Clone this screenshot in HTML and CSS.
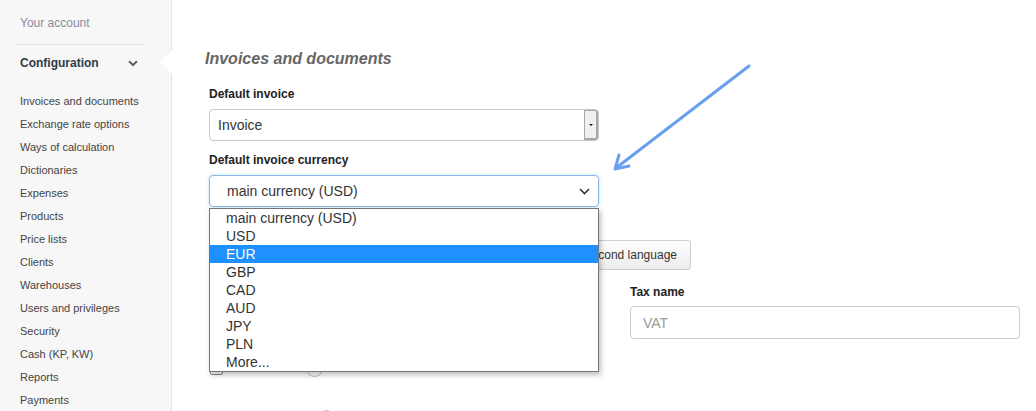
FILE: index.html
```html
<!DOCTYPE html>
<html lang="en">
<head>
    <meta charset="UTF-8">
    <title>Invoices and documents - Configuration</title>
    <link rel="stylesheet" href="styles.css">
</head>
<body>
    <div class="sidebar">
        <div class="account"><a href="#">Your account</a></div>
        <div class="section-title">
            <span>Configuration</span>
            <svg class="chevron" width="10" height="7" viewBox="0 0 10 7"><path d="M1 1.2 L5 5 L9 1.2" fill="none" stroke="#5a6470" stroke-width="2"/></svg>
            <span class="notch"></span>
        </div>
        <ul class="menu">
            <li><a href="#">Invoices and documents</a></li>
            <li><a href="#">Exchange rate options</a></li>
            <li><a href="#">Ways of calculation</a></li>
            <li><a href="#">Dictionaries</a></li>
            <li><a href="#">Expenses</a></li>
            <li><a href="#">Products</a></li>
            <li><a href="#">Price lists</a></li>
            <li><a href="#">Clients</a></li>
            <li><a href="#">Warehouses</a></li>
            <li><a href="#">Users and privileges</a></li>
            <li><a href="#">Security</a></li>
            <li><a href="#">Cash (KP, KW)</a></li>
            <li><a href="#">Reports</a></li>
            <li><a href="#">Payments</a></li>
        </ul>
    </div>

    <div class="main">
        <h2>Invoices and documents</h2>

        <div class="field">
            <label>Default invoice</label>
            <div class="old-select">
                <span>Invoice</span>
                <span class="old-button"><span class="tri"></span></span>
            </div>
        </div>

        <div class="field currency">
            <label>Default invoice currency</label>
            <div class="select focused">
                <span>main currency (USD)</span>
                <svg width="11" height="7" viewBox="0 0 11 7"><path d="M1 1 L5.5 5.5 L10 1" fill="none" stroke="#333" stroke-width="1.6"/></svg>
            </div>
            <ul class="options">
                <li>main currency (USD)</li>
                <li>USD</li>
                <li class="active">EUR</li>
                <li>GBP</li>
                <li>CAD</li>
                <li>AUD</li>
                <li>JPY</li>
                <li>PLN</li>
                <li>More...</li>
            </ul>
        </div>

        <div class="buttons">
            <button class="btn first">Invoice in one language</button>
            <button class="btn second">Invoice in second language</button>
        </div>

        <div class="row">
            <div class="col">
                <div class="checks">
                    <span class="checkbox"></span>
                    <span class="radio"></span>
                </div>
                <div class="checks lower">
                    <span class="radio"></span>
                </div>
            </div>
            <div class="col">
                <label>Tax name</label>
                <input class="input" type="text" placeholder="VAT">
            </div>
        </div>

        <svg class="pointer" width="150" height="115" viewBox="0 0 150 115">
            <path d="M145 4 L12 106" stroke="#6a9ff0" stroke-width="3" fill="none" stroke-linecap="round"/>
            <path d="M15 93 L11 107 L25 104" stroke="#6a9ff0" stroke-width="3" fill="none" stroke-linecap="round" stroke-linejoin="round"/>
        </svg>
    </div>
</body>
</html>
```

FILE: styles.css
```css
body {
    font-family: "Liberation Sans", Arial, sans-serif;
    background-color: #fff;
    margin: 0;
    padding: 0;
    display: flex;
    min-height: 411px;
    overflow: hidden;
}
a {
    color: inherit;
    text-decoration: none;
}
.sidebar {
    width: 172px;
    flex-shrink: 0;
    background-color: #f7f7f7;
    border-right: 1px solid #dfe5ec;
    box-sizing: border-box;
    padding: 0 27px 0 15px;
}
.account {
    font-size: 12px;
    color: #8b8b99;
    padding: 16px 5px 0;
    height: 28px;
    border-bottom: 1px solid #dde3ea;
}
.section-title {
    position: relative;
    display: flex;
    justify-content: space-between;
    align-items: center;
    font-size: 12px;
    font-weight: bold;
    color: #2e3a48;
    padding: 10px 5px 0;
    height: 16px;
}
.chevron {
    margin-right: 1px;
}
.notch {
    position: absolute;
    right: -28px;
    top: 5px;
    width: 0;
    height: 0;
    border-top: 12px solid transparent;
    border-bottom: 12px solid transparent;
    border-right: 12px solid #fff;
}
.menu {
    list-style-type: none;
    margin: 0;
    padding: 23px 0 0 5px;
}
.menu li {
    font-size: 11px;
    color: #444;
    height: 23px;
    line-height: 14px;
}
.main {
    position: relative;
    flex: 1;
    padding: 0 0 0 37px;
}
h2 {
    margin: 49px 0 0 -4px;
    font-size: 16px;
    line-height: 20px;
    font-style: italic;
    font-weight: bold;
    color: #666;
}
label {
    display: block;
    font-size: 12px;
    font-weight: bold;
    color: #222;
    line-height: 16px;
}
.field {
    width: 390px;
}
.field label {
    margin: 17px 0 7px;
}
.field.currency {
    position: relative;
}
.field.currency label {
    margin-top: 11px;
}
.old-select {
    height: 32px;
    box-sizing: border-box;
    border: 1px solid #c8c8c8;
    border-radius: 4px;
    display: flex;
    align-items: center;
    justify-content: space-between;
    padding-left: 8px;
    font-size: 14px;
    color: #333;
}
.old-button {
    width: 14px;
    height: 30px;
    box-sizing: border-box;
    background-color: #f0f0f0;
    border: 1px solid #a8a8a8;
    border-right-width: 2px;
    border-bottom-width: 2px;
    border-radius: 0 3px 3px 0;
    display: flex;
    align-items: center;
    justify-content: center;
}
.tri {
    width: 0;
    height: 0;
    border-left: 2px solid transparent;
    border-right: 2px solid transparent;
    border-top: 2px solid #111;
}
.select {
    height: 32px;
    box-sizing: border-box;
    border: 1px solid #8ab8e8;
    border-radius: 4px;
    box-shadow: 0 0 3px rgba(102, 175, 233, 0.5);
    display: flex;
    align-items: center;
    justify-content: space-between;
    padding: 0 8px 0 17px;
    font-size: 14px;
    color: #333;
}
.options {
    position: absolute;
    left: 0;
    margin: 1px 0 0;
    width: 390px;
    box-sizing: border-box;
    list-style-type: none;
    padding: 0;
    background-color: #fff;
    border: 1px solid #767676;
    box-shadow: 2px 3px 5px rgba(0, 0, 0, 0.25);
    z-index: 5;
}
.options li {
    height: 18px;
    line-height: 18px;
    padding-left: 16px;
    font-size: 14px;
    color: #333;
}
.options li.active {
    background-color: #1e90ff;
    color: #fff;
}
.buttons {
    display: flex;
    gap: 10px;
    margin-top: 33px;
}
.btn {
    height: 30px;
    box-sizing: border-box;
    border: 1px solid #cfcfcf;
    border-radius: 3px;
    background: linear-gradient(#fff, #ececec);
    font-family: "Liberation Sans", Arial, sans-serif;
    font-size: 12px;
    color: #333;
    padding: 0;
}
.btn.first {
    width: 210px;
}
.btn.second {
    width: 262px;
    text-align: right;
    padding-right: 13px;
}
.row {
    display: flex;
    gap: 31px;
    margin-top: 14px;
}
.col {
    width: 390px;
}
.col label {
    margin-bottom: 6px;
}
.checks {
    display: flex;
    align-items: center;
    gap: 83px;
    padding: 76px 0 0 1px;
}
.checks.lower {
    padding: 33px 0 0 109px;
}
.checkbox {
    width: 11px;
    height: 11px;
    border: 1px solid #888;
    border-radius: 2px;
}
.radio {
    width: 15px;
    height: 15px;
    border: 1px solid #bbb;
    border-radius: 50%;
}
.input {
    display: block;
    width: 390px;
    height: 33px;
    box-sizing: border-box;
    border: 1px solid #ccc;
    border-radius: 4px;
    padding: 0 12px;
    font-family: "Liberation Sans", Arial, sans-serif;
    font-size: 14px;
}
.input::placeholder {
    color: #999;
}
.pointer {
    position: absolute;
    left: 432px;
    top: 62px;
}
```
